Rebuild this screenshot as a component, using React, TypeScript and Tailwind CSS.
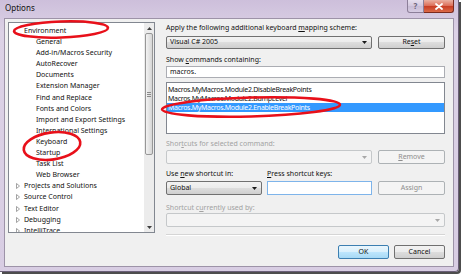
import React from 'react';

type TreeItem = { label: string; level: number; collapsed?: boolean };

const tree: TreeItem[] = [
  { label: 'Environment', level: 0 },
  { label: 'General', level: 1 },
  { label: 'Add-in/Macros Security', level: 1 },
  { label: 'AutoRecover', level: 1 },
  { label: 'Documents', level: 1 },
  { label: 'Extension Manager', level: 1 },
  { label: 'Find and Replace', level: 1 },
  { label: 'Fonts and Colors', level: 1 },
  { label: 'Import and Export Settings', level: 1 },
  { label: 'International Settings', level: 1 },
  { label: 'Keyboard', level: 1 },
  { label: 'Startup', level: 1 },
  { label: 'Task List', level: 1 },
  { label: 'Web Browser', level: 1 },
  { label: 'Projects and Solutions', level: 0, collapsed: true },
  { label: 'Source Control', level: 0, collapsed: true },
  { label: 'Text Editor', level: 0, collapsed: true },
  { label: 'Debugging', level: 0, collapsed: true },
  { label: 'IntelliTrace', level: 0, collapsed: true },
];

const commands = [
  'Macros.MyMacros.Module2.DisableBreakPoints',
  'Macros.MyMacros.Module2.BumpLevel',
  'Macros.MyMacros.Module2.EnableBreakPoints',
];

function Arrow({ disabled }: { disabled?: boolean }) {
  return (
    <svg width="5" height="3" viewBox="0 0 5 3" className="shrink-0">
      <polygon points="0,0 5,0 2.5,3" fill={disabled ? '#a8a8a8' : '#1a1a1a'} />
    </svg>
  );
}

function Btn({ children, disabled, def, className = '' }: { children: React.ReactNode; disabled?: boolean; def?: boolean; className?: string }) {
  const look = disabled
    ? 'border-[#adb2b5] bg-[#f4f4f4] text-[#8d8d8d]'
    : def
    ? 'border-[#3c7fb1] bg-[linear-gradient(#eaf6fd,#d9f0fc_50%,#bee6fd_50%,#a7d9f5)] text-[#111]'
    : 'border-[#707070] bg-[linear-gradient(#f2f2f2,#ebebeb_50%,#dddddd_50%,#cfcfcf)] text-[#111]';
  return (
    <div className={`flex items-center justify-center rounded-[2px] border ${look} ${className}`}>
      {children}
    </div>
  );
}

function Combo({ text, disabled, className = '' }: { text?: string; disabled?: boolean; className?: string }) {
  const look = disabled
    ? 'border-[#c5c8ca] bg-[#f4f4f4]'
    : 'border-[#707070] bg-[linear-gradient(#f2f2f2,#ebebeb_50%,#dddddd_50%,#cfcfcf)]';
  return (
    <div className={`flex items-center rounded-[2px] border pl-[3px] pr-[4px] ${look} ${className}`}>
      <span className="flex-1 text-[#111]">{text}</span>
      <Arrow disabled={disabled} />
    </div>
  );
}

function Label({ children, disabled, className = '' }: { children: React.ReactNode; disabled?: boolean; className?: string }) {
  return (
    <div className={`h-[10px] leading-[10px] ${disabled ? 'text-[#a2a2a2]' : 'text-[#111]'} ${className}`}>{children}</div>
  );
}

function Scrollbar() {
  return (
    <div className="flex w-[10px] flex-col bg-[#ececec]">
      <div className="flex h-[10px] items-center justify-center">
        <svg width="5" height="3" viewBox="0 0 5 3">
          <polygon points="0,3 5,3 2.5,0" fill="#404040" />
        </svg>
      </div>
      <div className="mx-[1px] flex h-[122px] items-center justify-center rounded-[2px] border border-[#979797] bg-[linear-gradient(90deg,#f3f3f3,#e4e4e4_50%,#d6d6d6)]">
        <div className="flex flex-col gap-[1px]">
          <div className="h-px w-[4px] bg-[#8a8a8a]" />
          <div className="h-px w-[4px] bg-[#8a8a8a]" />
          <div className="h-px w-[4px] bg-[#8a8a8a]" />
        </div>
      </div>
      <div className="flex-1" />
      <div className="flex h-[10px] items-center justify-center">
        <svg width="5" height="3" viewBox="0 0 5 3">
          <polygon points="0,0 5,0 2.5,3" fill="#404040" />
        </svg>
      </div>
    </div>
  );
}

function Tree() {
  return (
    <div className="flex h-[211px] w-[147px] border border-[#828790] bg-white">
      <div className="flex-1 overflow-hidden pt-[2px]">
        {tree.map((t) => (
          <div key={t.label} className="relative h-[11.1px] leading-[11.1px] whitespace-nowrap text-[#111]">
            {t.collapsed && (
              <svg width="4" height="6" viewBox="0 0 4 6" className="absolute left-[7px] top-[3px]">
                <polygon points="0.5,0.5 3.5,3 0.5,5.5" fill="none" stroke="#8c8c8c" strokeWidth="0.8" />
              </svg>
            )}
            <span className={t.level === 0 ? 'ml-[15px]' : 'ml-[27px]'}>{t.label}</span>
          </div>
        ))}
      </div>
      <Scrollbar />
    </div>
  );
}

function RightPane() {
  return (
    <div className="ml-[11px] flex w-[279px] flex-col">
      <Label className="mt-[4px]">
        Apply the following additional keyboard <span className="underline">m</span>apping scheme:
      </Label>
      <div className="mt-[3px] flex h-[13px] gap-[6px]">
        <Combo text="Visual C# 2005" className="flex-1" />
        <Btn className="w-[67px]">
          Re<span className="underline">s</span>et
        </Btn>
      </div>
      <Label className="mt-[6px]">
        Show <span className="underline">c</span>ommands containing:
      </Label>
      <div className="mt-[1px] flex h-[12px] items-center border border-[#abadb3] bg-white pl-[3px] text-[#111]">macros.</div>
      <div className="mt-[4px] h-[52px] border border-[#828790] bg-white pt-[1.5px]">
        {commands.map((c, i) => (
          <div
            key={c}
            className={`h-[9px] pl-[1px] leading-[9px] tracking-[-0.3px] whitespace-nowrap ${i === 2 ? 'bg-[#3399ff] text-white' : 'text-[#111]'}`}
          >
            {c}
          </div>
        ))}
      </div>
      <Label disabled className="mt-[5px]">
        Shor<span className="underline">t</span>cuts for selected command:
      </Label>
      <div className="mt-[1px] flex h-[14px] gap-[6px]">
        <Combo disabled className="flex-1" />
        <Btn disabled className="w-[67px]">
          <span className="underline">R</span>emove
        </Btn>
      </div>
      <div className="mt-[5px] flex">
        <Label className="w-[101px]">
          Use <span className="underline">n</span>ew shortcut in:
        </Label>
        <Label>
          <span className="underline">P</span>ress shortcut keys:
        </Label>
      </div>
      <div className="mt-[2px] flex h-[14px]">
        <Combo text="Global" className="w-[96px]" />
        <div className="ml-[5px] w-[105px] border border-[#7eb4ea] bg-white" />
        <Btn disabled className="ml-[6px] w-[67px]">
          Assi<span className="underline">g</span>n
        </Btn>
      </div>
      <Label disabled className="mt-[8px]">
        Shortcut c<span className="underline">u</span>rrently used by:
      </Label>
      <Combo disabled className="mt-[0px] h-[14px]" />
      <div className="mt-[7px] h-[2px] border-t border-b border-t-[#d5d5d5] border-b-white" />
      <div className="mt-[9px] flex justify-end gap-[5px]">
        <Btn def className="h-[14px] w-[51px]">OK</Btn>
        <Btn className="h-[14px] w-[51px]">Cancel</Btn>
      </div>
    </div>
  );
}

function Annotations() {
  return (
    <svg width="463" height="277" viewBox="0 0 463 277" className="pointer-events-none absolute left-0 top-0">
      <g fill="none" stroke="#e8101a" strokeWidth="2.6">
        <ellipse cx="61" cy="29.5" rx="47" ry="8" transform="rotate(-2 61 29.5)" />
        <ellipse cx="52" cy="146" rx="28.5" ry="13.5" transform="rotate(-8 52 146)" />
        <ellipse cx="251" cy="107" rx="89" ry="9.5" transform="rotate(-1.5 251 107)" />
      </g>
    </svg>
  );
}

export default function App() {
  return (
    <div className="relative h-[277px] w-[463px] overflow-hidden bg-white font-['Noto_Sans','Open_Sans',sans-serif] text-[7px]">
      <div className="flex h-[272px] w-[459px] flex-col rounded-br-[4px] border-r border-b border-[#6b5f78] bg-[linear-gradient(#cdbfdb,#dcd2e6_12%,#d8cde3)] shadow-[2px_2px_0_0_#4d4d4d]">
        <div className="flex h-[18px] items-start">
          <div className="pl-[5px] pt-[3px] text-[8px] leading-[10px] text-[#111]">Options</div>
          <div className="ml-auto mr-[4px] flex">
            <div className="flex h-[13px] w-[17px] items-center justify-center rounded-bl-[3px] border border-t-0 border-[#8c7f99] bg-[linear-gradient(#e6dfee,#d3c8df_50%,#c7bbd5_50%,#d6cce2)] text-[8px] font-bold text-[#6d6478]">
              ?
            </div>
            <div className="flex h-[13px] w-[30px] items-center justify-center rounded-br-[3px] border border-t-0 border-l-0 border-[#7a2a1e] bg-[linear-gradient(#eab0a2,#dc6b55_50%,#c73a22_50%,#dc6a48)]">
              <svg width="8" height="7" viewBox="0 0 8 7">
                <path d="M1 1 L7 6 M7 1 L1 6" stroke="white" strokeWidth="1.8" strokeLinecap="round" />
              </svg>
            </div>
          </div>
        </div>
        <div className="mx-[4px] flex h-[249px] border border-[#9d93a8] bg-[#f0f0f0]">
          <div className="ml-[3px] mt-[3px]">
            <Tree />
          </div>
          <RightPane />
        </div>
      </div>
      <Annotations />
    </div>
  );
}
